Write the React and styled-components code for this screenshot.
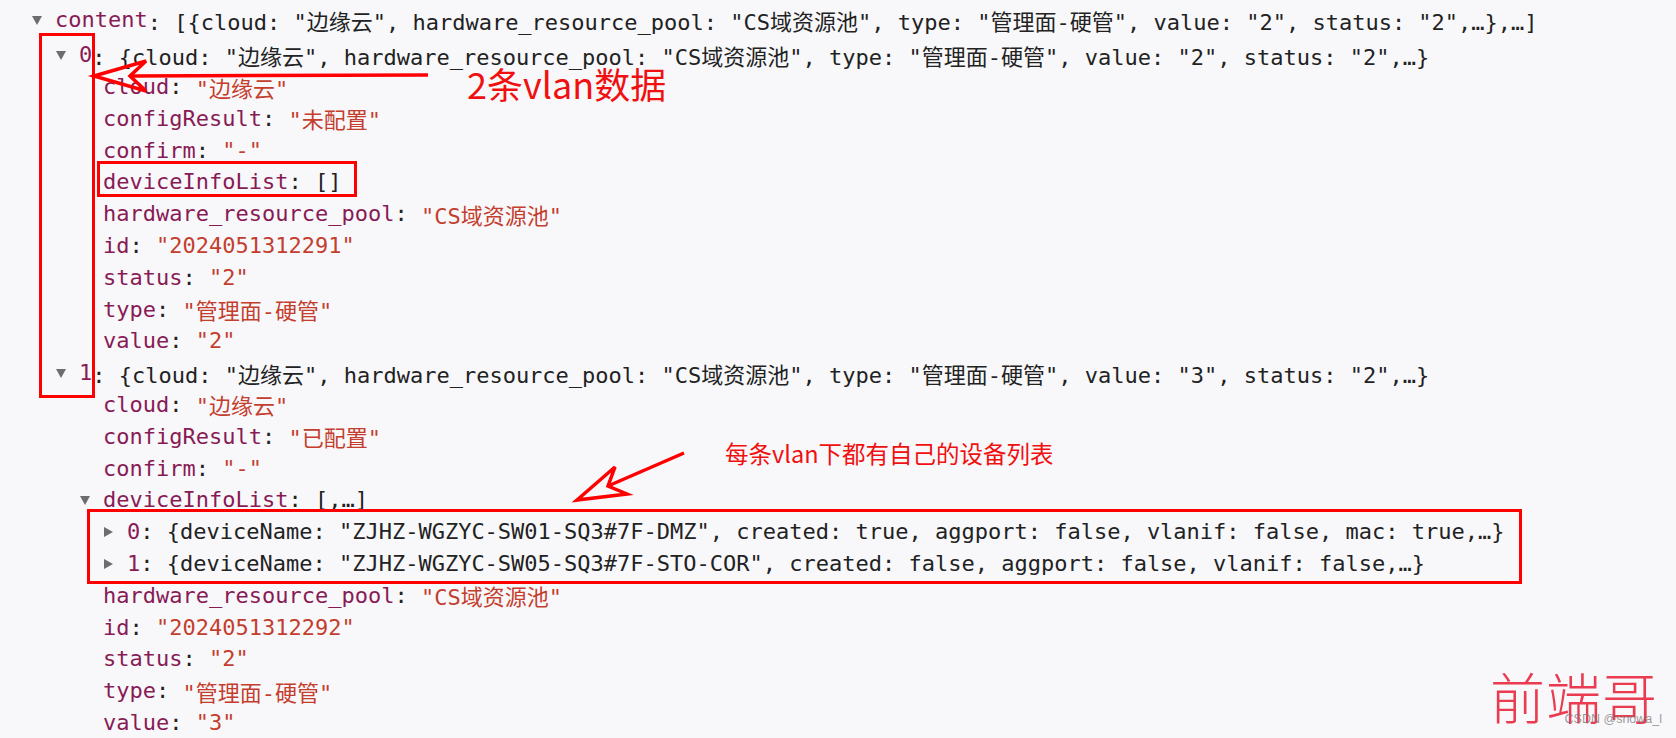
import React from 'react';
import styled, { createGlobalStyle } from 'styled-components';

const GlobalStyle = createGlobalStyle`
  html, body {
    margin: 0;
    padding: 0;
    background: #f8f8fb;
  }
`;

const Page = styled.div`
  position: relative;
  width: 1676px;
  height: 738px;
  overflow: hidden;
  box-sizing: border-box;
  padding-top: 4px;
  background: #f8f8fb;
  font-family: "DejaVu Sans Mono", "Noto Sans CJK SC", monospace;
  font-size: 22px;
  color: #222;
`;

const Tree = styled.div`
  display: flex;
  flex-direction: column;
`;

const Row = styled.div`
  display: flex;
  align-items: center;
  height: 31.8px;
  padding-left: ${p => 31.5 + p.$level * 24}px;
  margin-bottom: ${p => p.$gap || 0}px;
  white-space: pre;
`;

const Toggle = styled.span`
  flex: 0 0 23.5px;
  display: flex;
  align-items: center;
  height: 100%;

  &::before {
    content: '';
    display: ${p => (p.$dir ? 'block' : 'none')};
    width: 0;
    height: 0;
    ${p =>
      p.$dir === 'down'
        ? `border-left: 5.5px solid transparent;
           border-right: 5.5px solid transparent;
           border-top: 9px solid #6d6d6d;
           margin-top: 2px;`
        : `border-top: 5.5px solid transparent;
           border-bottom: 5.5px solid transparent;
           border-left: 9px solid #6d6d6d;
           margin-top: 1px;`}
  }
`;

const Key = styled.span`
  color: #881b55;
`;

const Str = styled.span`
  color: #c43e2e;
`;

const Highlight = styled.div`
  position: absolute;
  left: ${p => p.$x}px;
  top: ${p => p.$y}px;
  width: ${p => p.$w}px;
  height: ${p => p.$h}px;
  box-sizing: border-box;
  border: 3.5px solid #ff0000;
`;

const Note = styled.div`
  position: absolute;
  left: ${p => p.$x}px;
  top: ${p => p.$y}px;
  font-family: "Noto Sans CJK SC", "Noto Sans", sans-serif;
  font-size: ${p => p.$size}px;
  line-height: 1;
  color: #f01010;
  white-space: nowrap;
`;

const Overlay = styled.svg`
  position: absolute;
  left: 0;
  top: 0;
  width: 1676px;
  height: 738px;
  pointer-events: none;
`;

const SignName = styled.div`
  position: absolute;
  right: 18px;
  top: 668px;
  font-family: "Noto Sans CJK SC", sans-serif;
  font-weight: 300;
  font-size: 55px;
  line-height: 1;
  letter-spacing: 1px;
  color: rgba(232, 38, 62, 0.9);
`;

const SignMark = styled.div`
  position: absolute;
  right: 14px;
  top: 713px;
  font-family: "Liberation Sans", sans-serif;
  font-size: 12.5px;
  line-height: 1;
  color: rgba(120, 120, 120, 0.75);
`;

const summary = (value) => (
  <>
    {'{cloud: "边缘云", hardware_resource_pool: "CS域资源池", type: "管理面-硬管", value: "'}
    {value}
    {'", status: "2",…}'}
  </>
);

const Prop = ({ name, value, level = 2, dir, plain }) => (
  <Row $level={level}>
    <Toggle $dir={dir} />
    <Key>{name}</Key>
    {': '}
    {plain ? value : <Str>"{value}"</Str>}
  </Row>
);

export default function App() {
  return (
    <Page>
      <GlobalStyle />
      <Tree>
        <Row $level={0} $gap={3}>
          <Toggle $dir="down" />
          <Key>content</Key>
          {': ['}
          {summary('2')}
          {',…]'}
        </Row>
        <Row $level={1}>
          <Toggle $dir="down" />
          <Key>0</Key>
          {': '}
          {summary('2')}
        </Row>
        <Prop name="cloud" value="边缘云" />
        <Prop name="configResult" value="未配置" />
        <Prop name="confirm" value="-" />
        <Prop name="deviceInfoList" value="[]" plain />
        <Prop name="hardware_resource_pool" value="CS域资源池" />
        <Prop name="id" value="2024051312291" />
        <Prop name="status" value="2" />
        <Prop name="type" value="管理面-硬管" />
        <Prop name="value" value="2" />
        <Row $level={1}>
          <Toggle $dir="down" />
          <Key>1</Key>
          {': '}
          {summary('3')}
        </Row>
        <Prop name="cloud" value="边缘云" />
        <Prop name="configResult" value="已配置" />
        <Prop name="confirm" value="-" />
        <Prop name="deviceInfoList" value="[,…]" dir="down" plain />
        <Row $level={3}>
          <Toggle $dir="right" />
          <Key>0</Key>
          {': {deviceName: "ZJHZ-WGZYC-SW01-SQ3#7F-DMZ", created: true, aggport: false, vlanif: false, mac: true,…}'}
        </Row>
        <Row $level={3}>
          <Toggle $dir="right" />
          <Key>1</Key>
          {': {deviceName: "ZJHZ-WGZYC-SW05-SQ3#7F-STO-COR", created: false, aggport: false, vlanif: false,…}'}
        </Row>
        <Prop name="hardware_resource_pool" value="CS域资源池" />
        <Prop name="id" value="2024051312292" />
        <Prop name="status" value="2" />
        <Prop name="type" value="管理面-硬管" />
        <Prop name="value" value="3" />
      </Tree>

      <Highlight $x={39} $y={33} $w={56} $h={365} />
      <Highlight $x={97} $y={161} $w={260} $h={36} />
      <Highlight $x={87} $y={509} $w={1435} $h={75} />

      <Overlay viewBox="0 0 1676 738">
        <g stroke="#ff0000" strokeWidth="3.5" fill="none" strokeLinejoin="miter">
          <line x1="428" y1="75" x2="130" y2="76" />
          <polygon points="94,76 146,61 130,76 146,91" />
          <line x1="684" y1="453" x2="608" y2="486" />
          <polygon points="577,500 615,467 608,486 627,494" />
        </g>
      </Overlay>

      <Note $x={467} $y={65} $size={36}>2条vlan数据</Note>
      <Note $x={725} $y={442} $size={23.5}>每条vlan下都有自己的设备列表</Note>

      <SignName>前端哥</SignName>
      <SignMark>CSDN @snowa_l</SignMark>
    </Page>
  );
}
